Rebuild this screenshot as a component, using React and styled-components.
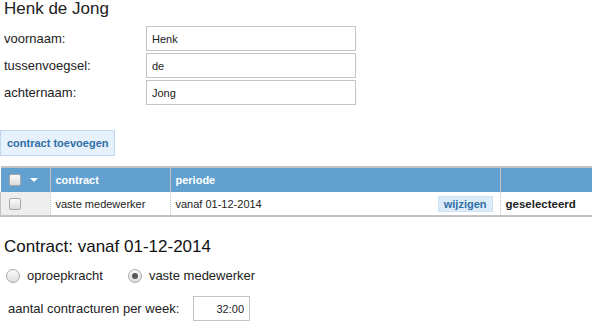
import React from 'react';
import styled, { createGlobalStyle } from 'styled-components';

const GlobalStyle = createGlobalStyle`
	body {
		margin: 0;
		background: #ffffff;
		font-family: "Liberation Sans", Arial, sans-serif;
		color: #222222;
	}
`;

const Page = styled.div`
	width: 592px;
	height: 327px;
	overflow: hidden;
`;

const Title = styled.h1`
	margin: -1px 0 0;
	padding: 0 4px;
	font-size: 17px;
	font-weight: normal;
	line-height: 19px;
	color: #222;
`;

const Form = styled.div`
	display: flex;
	flex-direction: column;
	gap: 2px;
	margin-top: 8px;
	padding-left: 4px;
`;

const Row = styled.div`
	display: flex;
	align-items: center;
	height: 25px;
`;

const Label = styled.label`
	width: 142px;
	font-size: 13px;
	color: #222;
`;

const TextInput = styled.input`
	box-sizing: border-box;
	width: ${({ $w }) => $w || '210px'};
	height: 25px;
	padding: 0 5px;
	border: 1px solid #c4c4c4;
	font-family: "Liberation Sans", Arial, sans-serif;
	font-size: 11px;
	color: #222;
	outline: none;
	text-align: ${({ $align }) => $align || 'left'};
`;

const AddButton = styled.button`
	display: block;
	margin-top: 25px;
	height: 26px;
	padding: 0 6px;
	border: 1px solid #bcd7ef;
	background: #e6f1fb;
	color: #2f6ea6;
	font-family: "Liberation Sans", Arial, sans-serif;
	font-size: 11px;
	font-weight: bold;
`;

const Table = styled.table`
	margin-top: 10px;
	width: 592px;
	border-collapse: collapse;
	font-size: 11px;
	border-top: 2px solid #c2c2c2;
	border-bottom: 2px solid #c2c2c2;
`;

const HeadCell = styled.th`
	height: 24px;
	padding: 0 5px;
	background: #62a1cf;
	color: #ffffff;
	text-align: left;
	font-weight: bold;
	font-size: 11px;
	width: ${({ $w }) => $w || 'auto'};
	border-left: 1px solid #c2c2c2;
	&:first-child {
		border-left: none;
	}
`;

const Cell = styled.td`
	height: 23px;
	padding: 0 5px;
	background: ${({ $grey }) => ($grey ? '#eeeeee' : '#ffffff')};
	color: #222;
	border-left: 1px dotted #c2c2c2;
	font-weight: ${({ $bold }) => ($bold ? 'bold' : 'normal')};
	font-size: ${({ $bold }) => ($bold ? '11.5px' : '11px')};
	&:first-child {
		border-left: 1px solid #c2c2c2;
	}
`;

const PeriodInner = styled.div`
	display: flex;
	align-items: center;
	justify-content: space-between;
`;

const Check = styled.span`
	display: inline-block;
	box-sizing: border-box;
	width: 12px;
	height: 12px;
	border: 1px solid #a8a8a8;
	border-radius: 2px;
	background: linear-gradient(#fafafa, #dcdcdc);
	vertical-align: middle;
`;

const HeadCheckWrap = styled.div`
	display: flex;
	align-items: center;
	gap: 9px;
	padding-left: 3px;
`;

const Caret = styled.span`
	width: 0;
	height: 0;
	border-left: 4px solid transparent;
	border-right: 4px solid transparent;
	border-top: 4px solid #ffffff;
`;

const SmallButton = styled.span`
	display: inline-block;
	padding: 1px 5px;
	margin-right: 2px;
	background: #dcebf8;
	border: 1px solid #cfe2f3;
	color: #2f6ea6;
	font-weight: bold;
`;

const SubTitle = styled.h2`
	margin: 20px 0 0;
	padding: 0 4px;
	font-size: 17px;
	font-weight: normal;
	line-height: 20px;
	color: #111;
`;

const RadioGroup = styled.div`
	display: flex;
	align-items: center;
	margin-top: 11px;
	padding-left: 6px;
	gap: 25px;
	font-size: 13px;
`;

const RadioOption = styled.div`
	display: flex;
	align-items: center;
	gap: 7px;
`;

const RadioDot = styled.span`
	position: relative;
	box-sizing: border-box;
	width: 14px;
	height: 14px;
	border-radius: 50%;
	border: 1px solid #a9a9a9;
	background: linear-gradient(#fbfbfb, #dedede);
	&::after {
		content: '';
		display: ${({ $on }) => ($on ? 'block' : 'none')};
		position: absolute;
		left: 3px;
		top: 3px;
		width: 6px;
		height: 6px;
		border-radius: 50%;
		background: #5a5a5a;
	}
`;

const HoursRow = styled.div`
	display: flex;
	align-items: center;
	margin-top: 13px;
	padding-left: 8px;
	font-size: 13px;
`;

const HoursLabel = styled.span`
	width: 185px;
`;

export default function App() {
	return (
		<Page>
			<GlobalStyle />
			<Title>Henk de Jong</Title>
			<Form>
				<Row>
					<Label>voornaam:</Label>
					<TextInput defaultValue="Henk" />
				</Row>
				<Row>
					<Label>tussenvoegsel:</Label>
					<TextInput defaultValue="de" />
				</Row>
				<Row>
					<Label>achternaam:</Label>
					<TextInput defaultValue="Jong" />
				</Row>
			</Form>
			<AddButton>contract toevoegen</AddButton>
			<Table>
				<thead>
					<tr>
						<HeadCell $w="39px">
							<HeadCheckWrap>
								<Check />
								<Caret />
							</HeadCheckWrap>
						</HeadCell>
						<HeadCell $w="109px">contract</HeadCell>
						<HeadCell $w="319px">periode</HeadCell>
						<HeadCell />
					</tr>
				</thead>
				<tbody>
					<tr>
						<Cell $grey>
							<HeadCheckWrap>
								<Check />
							</HeadCheckWrap>
						</Cell>
						<Cell>vaste medewerker</Cell>
						<Cell>
							<PeriodInner>
								<span>vanaf 01-12-2014</span>
								<SmallButton>wijzigen</SmallButton>
							</PeriodInner>
						</Cell>
						<Cell $bold>geselecteerd</Cell>
					</tr>
				</tbody>
			</Table>
			<SubTitle>Contract: vanaf 01-12-2014</SubTitle>
			<RadioGroup>
				<RadioOption>
					<RadioDot />
					<span>oproepkracht</span>
				</RadioOption>
				<RadioOption>
					<RadioDot $on />
					<span>vaste medewerker</span>
				</RadioOption>
			</RadioGroup>
			<HoursRow>
				<HoursLabel>aantal contracturen per week:</HoursLabel>
				<TextInput defaultValue="32:00" $align="right" $w="57px" />
			</HoursRow>
		</Page>
	);
}
